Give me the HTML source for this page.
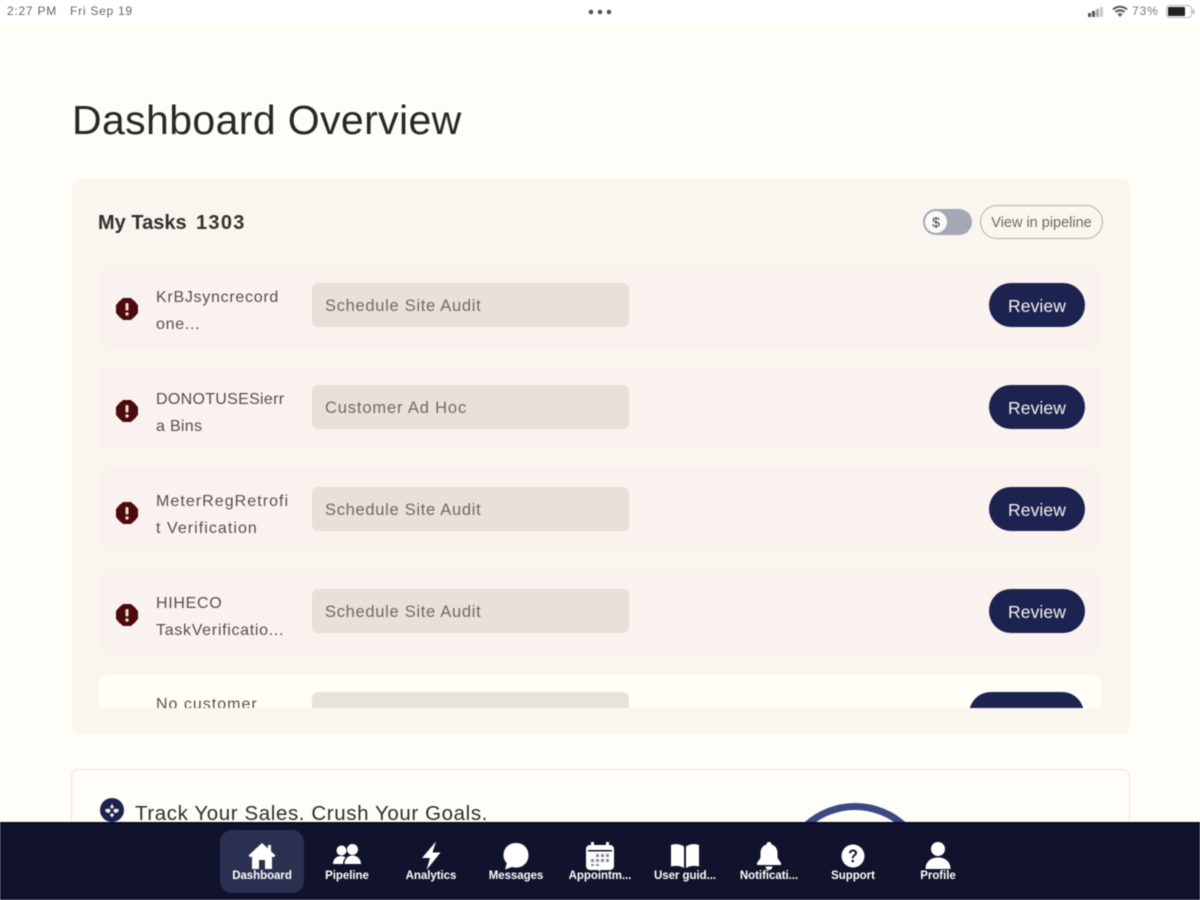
<!DOCTYPE html>
<html><head><meta charset="utf-8"><style>
*{box-sizing:border-box;margin:0;padding:0}
html,body{width:1200px;height:900px;overflow:hidden;background:#fffdf7;font-family:"Liberation Sans",sans-serif}
.a{position:absolute;white-space:nowrap}
#root{position:relative;width:1200px;height:900px;overflow:hidden;filter:blur(.45px)}
.row{position:absolute;left:99px;width:1002px;height:84px;background:#f9f2ef;border-radius:10px}
.ic{position:absolute;left:116px;width:22px;height:22px}
.n{position:absolute;left:156px;font-size:16px;line-height:27px;color:#55504d;white-space:nowrap}
.chip{position:absolute;left:312px;width:317px;height:44px;background:#e7e1da;border-radius:6px;font-size:16.5px;line-height:46px;padding-left:13px;color:#6f6a66;letter-spacing:.7px}
.btn{position:absolute;left:989px;width:96px;height:44px;background:#1d2350;border-radius:22px;color:#f4f2ee;font-size:17.5px;line-height:46px;text-align:center;letter-spacing:.1px}
.ni{position:absolute;top:824px;width:84px;height:70px;color:#fff;text-align:center}
.ni svg{position:absolute;left:26px;top:16px;width:32px;height:32px}
.ni span{position:absolute;left:0;right:0;top:45px;font-size:11.5px;font-weight:bold;line-height:14px;letter-spacing:-.05px}
</style></head><body><div id="root">

<div class="a" style="left:0;top:0;width:1200px;height:24px;background:#fff"></div>
<div class="a" style="left:7px;top:4px;font-size:12px;color:#666;letter-spacing:.75px">2:27 PM</div>
<div class="a" style="left:70px;top:4px;font-size:12px;color:#666;letter-spacing:.75px">Fri Sep 19</div>
<svg class="a" style="left:588px;top:9px" width="24" height="6"><circle cx="3" cy="3" r="2.300" fill="#555"/><circle cx="12" cy="3" r="2.300" fill="#555"/><circle cx="21" cy="3" r="2.300" fill="#555"/></svg>
<svg class="a" style="left:1088px;top:5px" width="20" height="13"><rect x="0" y="8" width="3" height="4" fill="#555"/><rect x="4" y="6" width="3" height="6" fill="#555"/><rect x="8" y="4" width="3" height="8" fill="#aaa"/><rect x="12" y="2" width="3" height="10" fill="#ccc"/></svg>
<svg class="a" style="left:1112px;top:5px" width="16" height="13" viewBox="0 0 16 13"><path d="M1 4.500C5 .8 11 .8 15 4.500M3.500 7C6 4.800 10 4.800 12.500 7" fill="none" stroke="#555" stroke-width="2"/><path d="M5.500 9C7 7.800 9 7.800 10.500 9L8 12z" fill="#555"/></svg>
<div class="a" style="left:1132px;top:4px;font-size:12px;color:#777;letter-spacing:.9px">73%</div>
<svg class="a" style="left:1166px;top:5px" width="30" height="14"><rect x=".5" y=".5" width="25" height="12" rx="3" fill="#fff" stroke="#bbb"/><rect x="2" y="2" width="17" height="9" rx="1" fill="#222"/><rect x="26.500" y="4" width="2" height="5" rx="1" fill="#bbb"/></svg>

<div class="a" style="left:72px;top:96px;font-size:41px;line-height:48px;color:#272727;letter-spacing:.38px">Dashboard Overview</div>

<div class="a" style="left:72px;top:179px;width:1058px;height:555px;background:#f9f6ef;border-radius:8px"></div>
<div class="a" style="left:98px;top:210px;font-size:20px;line-height:26px;font-weight:bold;color:#2f2f2f">My Tasks</div>
<div class="a" style="left:196px;top:210px;font-size:20px;line-height:26px;font-weight:bold;color:#3a2f30;letter-spacing:1.300px">1303</div>

<div class="a" style="left:923px;top:209px;width:49px;height:26px;border-radius:13px;background:#a5a6b6"></div>
<div class="a" style="left:925px;top:211px;width:22px;height:22px;border-radius:11px;background:#fbfaf6;font-size:14px;line-height:22px;text-align:center;color:#444">$</div>
<div class="a" style="left:980px;top:205px;width:123px;height:34px;border-radius:17px;border:1.500px solid #b5afa6;font-size:14.5px;line-height:34px;text-align:center;color:#6c6864">View in pipeline</div>

<div class="row" style="top:264px"></div>
<svg class="ic" style="top:298px" viewBox="0 0 22 22"><path d="M7 0H15L22 7V15L15 22H7L0 15V7z" fill="#4c0a0e"/><circle cx="11" cy="11" r="11" fill="#4c0a0e"/><rect x="9.500" y="5" width="3" height="7.500" rx="1" fill="#e9dcd8"/><circle cx="11" cy="16" r="1.700" fill="#e9dcd8"/></svg>
<div class="n" style="top:284px;letter-spacing:.72px">KrBJsyncrecord<br>one...</div>
<div class="chip" style="top:283px">Schedule Site Audit</div>
<div class="btn" style="top:283px">Review</div>

<div class="row" style="top:366px"></div>
<svg class="ic" style="top:400px" viewBox="0 0 22 22"><path d="M7 0H15L22 7V15L15 22H7L0 15V7z" fill="#4c0a0e"/><circle cx="11" cy="11" r="11" fill="#4c0a0e"/><rect x="9.500" y="5" width="3" height="7.500" rx="1" fill="#e9dcd8"/><circle cx="11" cy="16" r="1.700" fill="#e9dcd8"/></svg>
<div class="n" style="top:386px;letter-spacing:.3px">DONOTUSESierr<br>a Bins</div>
<div class="chip" style="top:385px;letter-spacing:.85px">Customer Ad Hoc</div>
<div class="btn" style="top:385px">Review</div>

<div class="row" style="top:468px"></div>
<svg class="ic" style="top:502px" viewBox="0 0 22 22"><path d="M7 0H15L22 7V15L15 22H7L0 15V7z" fill="#4c0a0e"/><circle cx="11" cy="11" r="11" fill="#4c0a0e"/><rect x="9.500" y="5" width="3" height="7.500" rx="1" fill="#e9dcd8"/><circle cx="11" cy="16" r="1.700" fill="#e9dcd8"/></svg>
<div class="n" style="top:488px;letter-spacing:1.05px">MeterRegRetrofi<br>t Verification</div>
<div class="chip" style="top:487px">Schedule Site Audit</div>
<div class="btn" style="top:487px">Review</div>

<div class="row" style="top:570px"></div>
<svg class="ic" style="top:604px" viewBox="0 0 22 22"><path d="M7 0H15L22 7V15L15 22H7L0 15V7z" fill="#4c0a0e"/><circle cx="11" cy="11" r="11" fill="#4c0a0e"/><rect x="9.500" y="5" width="3" height="7.500" rx="1" fill="#e9dcd8"/><circle cx="11" cy="16" r="1.700" fill="#e9dcd8"/></svg>
<div class="n" style="top:590px;letter-spacing:.7px">HIHECO<br>TaskVerificatio...</div>
<div class="chip" style="top:589px">Schedule Site Audit</div>
<div class="btn" style="top:589px">Review</div>

<div class="a" style="left:99px;top:675px;width:1002px;height:33px;overflow:hidden;background:#fffdf5;border-radius:10px 10px 0 0">
  <div class="n" style="left:57px;top:16px;position:absolute;letter-spacing:1px">No customer</div>
  <div class="chip" style="left:213px;top:17px;background:#e6e3db"></div>
  <div class="btn" style="left:870px;top:17px;width:115px"></div>
</div>

<div class="a" style="left:71px;top:769px;width:1059px;height:53px;border:1.500px solid #e7e4dc;border-bottom:0;border-radius:8px 8px 0 0"></div>
<svg class="a" style="left:100px;top:798px" width="24" height="24" viewBox="0 0 24 24"><circle cx="12" cy="12" r="12" fill="#1d2350"/><path d="M12 5.500l1.800 3.700-1.800 1.800-1.800-1.800z" fill="#f4f2ee"/><path d="M5.500 11l4-.3 1.300 2-2 2.500-3.300-1.500z" fill="#f4f2ee"/><path d="M18.500 11l-4-.3-1.300 2 2 2.500 3.300-1.500z" fill="#f4f2ee"/><circle cx="12" cy="17" r="1.800" fill="#f4f2ee"/></svg>
<div class="a" style="left:135px;top:801px;font-size:20.500px;line-height:26px;color:#2c2c2c;letter-spacing:.6px">Track Your Sales. Crush Your Goals.</div>
<svg class="a" style="left:780px;top:795px" width="150" height="28"><path d="M26.600 30A72.500 72.500 0 0 1 123.400 30" fill="none" stroke="#3d4781" stroke-width="7"/></svg>

<div class="a" style="left:0;top:822px;width:1200px;height:78px;background:#10132b;border-top:2px solid #08091a"></div>
<div class="a" style="left:220px;top:830px;width:84px;height:63px;background:#2b2f50;border-radius:12px"></div>

<div class="ni" style="left:220px"><svg viewBox="0 0 32 32"><path d="M16 3L2.500 15.500 4.500 17.500 6 16.200V29H13V20H19V29H26V16.200L27.500 17.500 29.500 15.500 25 11.300V5H22V8.500z" fill="#fff"/></svg><span>Dashboard</span></div>
<div class="ni" style="left:305px"><svg viewBox="0 0 32 32"><circle cx="10.500" cy="10.500" r="5" fill="#fff"/><circle cx="21.500" cy="9.500" r="5.500" fill="#fff"/><path d="M2 24c0-5 3.500-8 8-8 2 0 3.500.5 4.500 1.500-1.500 1.500-2.500 3.700-2.500 6.500z" fill="#fff"/><path d="M13.500 24c0-5 3.500-8.500 8-8.500s8.500 3.500 8.500 8.500z" fill="#fff"/></svg><span>Pipeline</span></div>
<div class="ni" style="left:389px"><svg viewBox="0 0 32 32"><path d="M21 1.500L7 18H15L11.500 30 25.500 12.500H17.500z" fill="#fff"/></svg><span>Analytics</span></div>
<div class="ni" style="left:474px"><svg viewBox="0 0 32 32"><path d="M16 3C8.500 3 3.500 8.500 3.500 15c0 3.300 1.200 6 3.300 8.200L5 29.500l7-2.500c1.200.4 2.600.6 4 .6 7.500 0 12.500-5.600 12.500-12.500S23.500 3 16 3z" fill="#fff"/></svg><span>Messages</span></div>
<div class="ni" style="left:558px"><svg viewBox="0 0 32 32"><path d="M7 2h3v3h12V2h3v3h1a4 4 0 0 1 4 4v17a4 4 0 0 1-4 4H6a4 4 0 0 1-4-4V9a4 4 0 0 1 4-4h1z" fill="#fff"/><rect x="4" y="10" width="24" height="1.500" fill="#11142c"/><g fill="#8a8c9a"><rect x="12" y="14" width="3" height="3"/><rect x="17" y="14" width="3" height="3"/><rect x="22" y="14" width="3" height="3"/><rect x="7" y="19" width="3" height="3"/><rect x="12" y="19" width="3" height="3"/><rect x="17" y="19" width="3" height="3"/><rect x="22" y="19" width="3" height="3"/><rect x="7" y="24" width="3" height="2"/><rect x="12" y="24" width="3" height="2"/></g></svg><span>Appointm...</span></div>
<div class="ni" style="left:643px"><svg viewBox="0 0 32 32"><path d="M2 5c4.500-1.500 9.500-1 13 1.500V28c-3.500-2.300-8.500-2.700-13-1.500z" fill="#fff"/><path d="M30 5c-4.500-1.500-9.500-1-13 1.500V28c3.500-2.300 8.500-2.700 13-1.500z" fill="#fff"/></svg><span>User guid...</span></div>
<div class="ni" style="left:727px"><svg viewBox="0 0 32 32"><path d="M16 2c-1.500 0-2.500 1-2.500 2.500C9.500 5.700 7.500 9 7.500 13v5L4 23v2h24v-2l-3.500-5v-5c0-4-2-7.300-6-8.500C18.500 3 17.500 2 16 2z" fill="#fff"/><path d="M12.500 26.500a3.500 3.500 0 0 0 7 0z" fill="#fff"/></svg><span>Notificati...</span></div>
<div class="ni" style="left:811px"><svg viewBox="0 0 32 32"><circle cx="16" cy="16" r="11.500" fill="#fff"/><path d="M12 13.200c0-2.400 1.800-3.700 4-3.700s4 1.300 4 3.400c0 2.900-3.200 2.700-3.200 5.300h-2c0-3.400 3.100-3.500 3.100-5.200 0-1-.8-1.600-1.900-1.600s-2 .7-2 1.800z" fill="#11142c"/><circle cx="15.800" cy="21" r="1.300" fill="#11142c"/></svg><span>Support</span></div>
<div class="ni" style="left:896px"><svg viewBox="0 0 32 32"><circle cx="16" cy="9" r="7" fill="#fff"/><path d="M3.500 29c0-7.500 5.500-11.500 12.500-11.500S28.500 21.500 28.500 29z" fill="#fff"/></svg><span>Profile</span></div>

</div></body></html>
